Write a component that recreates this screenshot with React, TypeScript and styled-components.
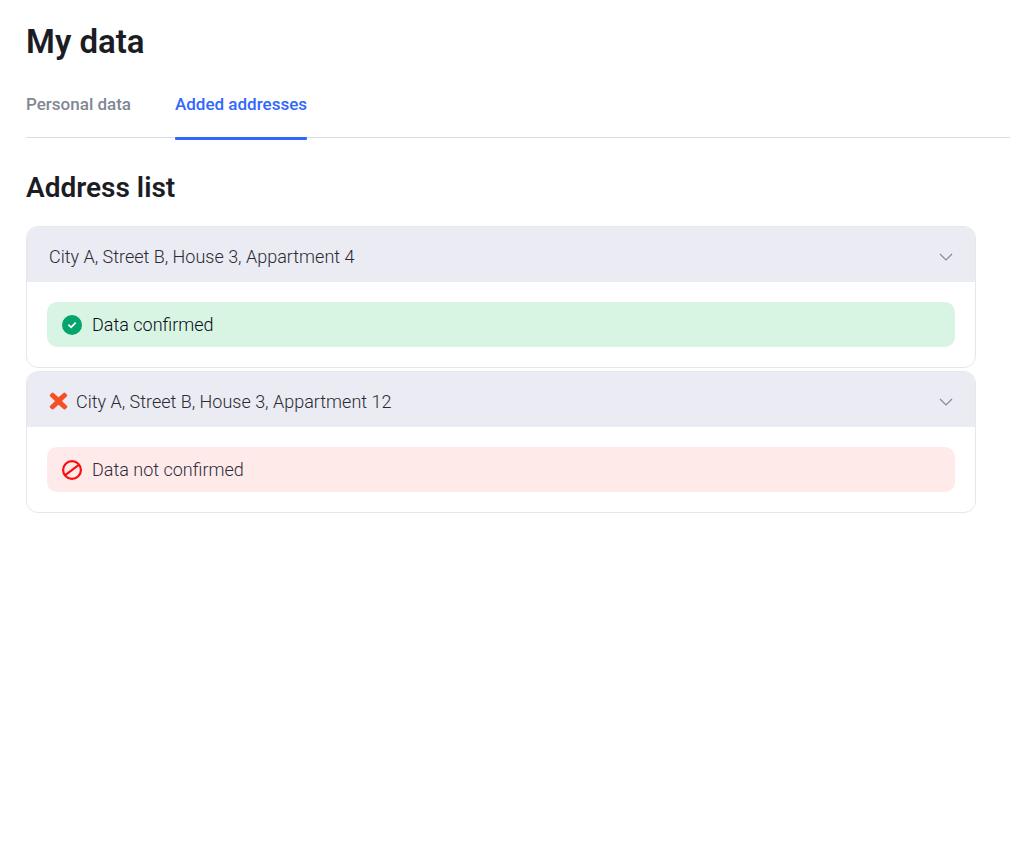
import React, { useState } from "react";
import styled, { createGlobalStyle } from "styled-components";

const GlobalStyle = createGlobalStyle`
  *, *::before, *::after { box-sizing: border-box; }
  body {
    margin: 0;
    background: #ffffff;
    color: #1b1d24;
    font-family: Roboto, "Liberation Sans", sans-serif;
  }
  button { font: inherit; border: 0; background: none; padding: 0; cursor: pointer; }
`;

const Page = styled.main`
  padding: 20px 20px 20px 26px;
`;

const Title = styled.h1`
  margin: 0 0 28px;
  font-size: 33px;
  line-height: 44px;
  font-weight: 600;
`;

const Tabs = styled.div`
  display: flex;
  gap: 44px;
  border-bottom: 1px solid #d9dee4;
`;

const Tab = styled.button<{ $active: boolean }>`
  position: relative;
  padding-bottom: 21px;
  font-size: 17px;
  line-height: 24px;
  font-weight: 500;
  color: ${(p) => (p.$active ? "#2f67ff" : "#7f8792")};

  &::after {
    content: "";
    display: ${(p) => (p.$active ? "block" : "none")};
    position: absolute;
    left: 0;
    right: 0;
    bottom: -3px;
    height: 3px;
    border-radius: 1px;
    background: #2f67ff;
  }
`;

const Subtitle = styled.h2`
  margin: 32px 0 20px;
  font-size: 28px;
  line-height: 36px;
  font-weight: 600;
`;

const AddressList = styled.div`
  display: flex;
  flex-direction: column;
  gap: 3px;
  margin-right: 34px;
`;

const Card = styled.section`
  border: 1px solid #e6e7ea;
  border-radius: 12px;
  overflow: hidden;
`;

const CardHeader = styled.button`
  display: flex;
  align-items: center;
  gap: 7px;
  width: 100%;
  height: 55px;
  padding: 4px 22px 0;
  background: #ebebf4;
  color: #2a2a30;
  font-size: 18px;
  line-height: 24px;
  font-weight: 300;
  text-align: left;
`;

const AddressText = styled.span`
  flex: 1;
`;

const CardBody = styled.div`
  padding: 20px;
`;

const Banner = styled.div<{ $confirmed: boolean }>`
  display: flex;
  align-items: center;
  gap: 10px;
  min-height: 45px;
  padding: 0 15px;
  border-radius: 10px;
  background: ${(p) => (p.$confirmed ? "#d8f5e3" : "#ffeaea")};
  color: ${(p) => (p.$confirmed ? "#080a18" : "#2c2c40")};
  font-size: 18px;
  line-height: 24px;
  font-weight: 300;
`;

const Icon = styled.svg`
  display: block;
  flex: none;
`;

const Chevron = () => (
  <Icon width="14" height="8" viewBox="0 0 14 8" fill="none" aria-hidden="true">
    <path d="M1 1l6 6 6-6" stroke="#858a95" strokeWidth="1.2" />
  </Icon>
);

const Cross = () => (
  <Icon width="20" height="20" viewBox="0 0 20 20" fill="none" aria-hidden="true">
    <path
      d="M4.2 .8L9.5 5.3 14.8 .8Q15.6 .3 16.3 1L18 2.8Q18.6 3.5 18 4.2L13 9 18.1 13.9Q18.7 14.7 18.1 15.4L16.3 17.2Q15.5 17.8 14.7 17.2L9.5 12.8 4.3 17.2Q3.5 17.8 2.8 17.2L.9 15.4Q.3 14.7 1 13.9L6 9 1 4.2Q.4 3.5 1 2.8L2.7 1Q3.4 .3 4.2 .8Z"
      fill="#f64f25"
    />
  </Icon>
);

const CheckCircle = () => (
  <Icon width="20" height="20" viewBox="0 0 20 20" fill="none" aria-hidden="true">
    <circle cx="10" cy="10" r="10" fill="#04a56d" />
    <path d="M6.4 9.7l2.7 2.6 4.6-4.7" stroke="#ffffff" strokeWidth="1.7" />
  </Icon>
);

const Prohibited = () => (
  <Icon width="20" height="20" viewBox="0 0 20 20" fill="none" aria-hidden="true">
    <circle cx="10" cy="10" r="8.9" stroke="#fc0d0d" strokeWidth="2.2" />
    <path d="M3.2 15.2L16.8 4.8" stroke="#fc0d0d" strokeWidth="2.2" />
  </Icon>
);

const addresses = [
  { address: "City A, Street B, House 3, Appartment 4", confirmed: true },
  { address: "City A, Street B, House 3, Appartment 12", confirmed: false },
];

function AddressCard({ address, confirmed }: { address: string; confirmed: boolean }) {
  const [open, setOpen] = useState(true);
  return (
    <Card>
      <CardHeader type="button" aria-expanded={open} onClick={() => setOpen(!open)}>
        {!confirmed && <Cross />}
        <AddressText>{address}</AddressText>
        <Chevron />
      </CardHeader>
      {open && (
        <CardBody>
          <Banner $confirmed={confirmed}>
            {confirmed ? <CheckCircle /> : <Prohibited />}
            <span>{confirmed ? "Data confirmed" : "Data not confirmed"}</span>
          </Banner>
        </CardBody>
      )}
    </Card>
  );
}

export default function App() {
  return (
    <>
      <GlobalStyle />
      <Page>
        <Title>My data</Title>
        <Tabs role="tablist">
          <Tab type="button" role="tab" aria-selected={false} $active={false}>Personal data</Tab>
          <Tab type="button" role="tab" aria-selected={true} $active={true}>Added addresses</Tab>
        </Tabs>
        <Subtitle>Address list</Subtitle>
        <AddressList>
          {addresses.map((item) => (
            <AddressCard key={item.address} {...item} />
          ))}
        </AddressList>
      </Page>
    </>
  );
}
